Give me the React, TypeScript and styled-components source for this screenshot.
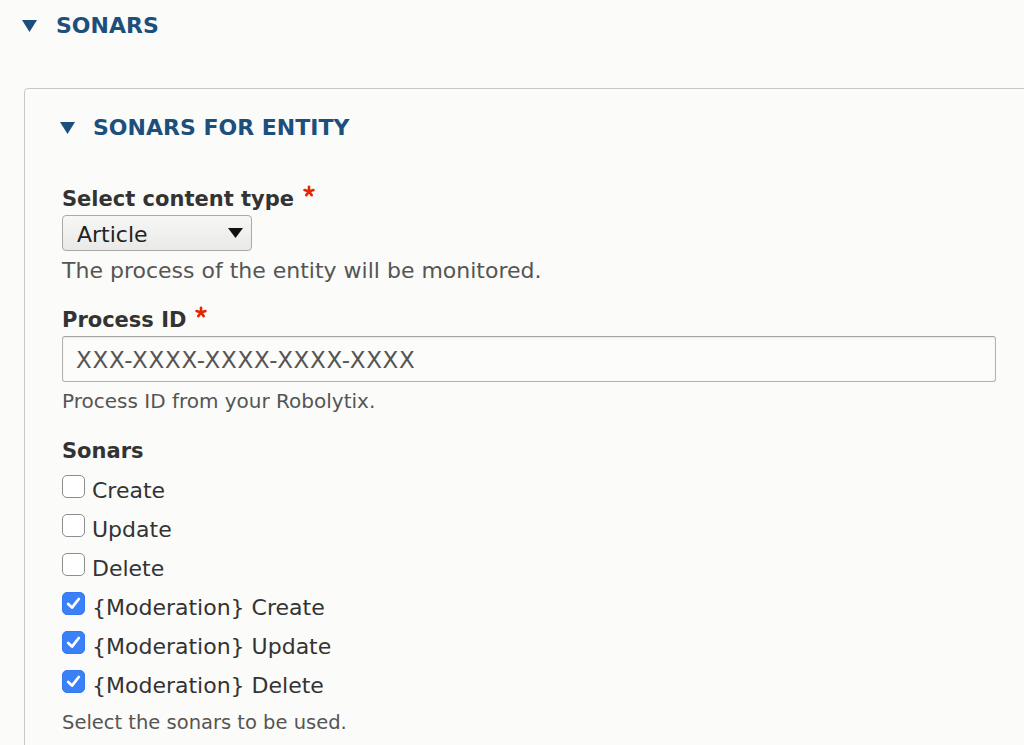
import React from 'react'
import styled, { createGlobalStyle } from 'styled-components'

const GlobalStyle = createGlobalStyle`
  html, body {
    margin: 0;
    padding: 0;
    background: #fbfbf9;
  }
  body {
    font-family: "DejaVu Sans", Verdana, sans-serif;
    color: #333;
    overflow: hidden;
  }
`

const Page = styled.div`
  width: 1024px;
  height: 745px;
  overflow: hidden;
  padding-top: 11px;
  box-sizing: border-box;
`

const Summary = styled.div<{ $indent: number; $gap: number }>`
  display: flex;
  align-items: center;
  gap: ${({ $gap }) => $gap}px;
  padding-left: ${({ $indent }) => $indent}px;
  height: 30px;
  line-height: 30px;
  font-size: 22px;
  font-weight: bold;
  text-transform: uppercase;
  color: #1d4f7d;
`

const Caret = styled.svg`
  width: 15px;
  height: 12px;
  flex: none;
`

const Fieldset = styled.section`
  margin: 47px -20px 0 24px;
  padding: 24px 0 40px 0;
  border: 1px solid #c8c8c6;
  border-radius: 4px;
  background: #fbfbf9;
`

const Body = styled.div`
  padding-left: 37px;
`

const Label = styled.div<{ $top: number }>`
  display: flex;
  align-items: flex-start;
  gap: 9px;
  margin-top: ${({ $top }) => $top}px;
  font-size: 21px;
  line-height: 26px;
  font-weight: bold;
  color: #333;
`

const Star = styled.svg`
  width: 12px;
  height: 12px;
  margin-top: -1px;
  flex: none;
`

const Select = styled.div`
  margin-top: 3px;
  width: 190px;
  height: 36px;
  box-sizing: border-box;
  display: flex;
  align-items: center;
  justify-content: space-between;
  padding: 3px 8px 0 14px;
  border: 1px solid #a9a9a7;
  border-radius: 4px;
  background: linear-gradient(#f7f7f5, #e9e9e7);
  font-size: 22px;
  color: #222;
  line-height: 30px;
`

const Arrow = styled.svg`
  width: 15px;
  height: 10px;
  margin-top: -3px;
`

const Description = styled.div<{ $top: number; $size: number }>`
  margin-top: ${({ $top }) => $top}px;
  font-size: ${({ $size }) => $size}px;
  line-height: ${({ $size }) => $size + 4}px;
  color: #555;
`

const Input = styled.div`
  margin-top: 3px;
  width: 934px;
  height: 46px;
  box-sizing: border-box;
  display: flex;
  align-items: center;
  padding: 2px 0 0 13px;
  border: 1px solid #b2b2b0;
  border-top-color: #a3a3a1;
  border-radius: 3px;
  background: #fcfcfa;
  box-shadow: inset 0 1px 2px rgba(0, 0, 0, 0.08);
  font-size: 23px;
  color: #555;
  letter-spacing: 0.7px;
`

const Options = styled.div`
  margin-top: 7px;
`

const Option = styled.div`
  display: flex;
  align-items: flex-start;
  gap: 7px;
  height: 39px;
  line-height: 39px;
  font-size: 22px;
  color: #333;
`

const Box = styled.span<{ $checked: boolean }>`
  flex: none;
  width: 23px;
  height: 23px;
  margin-top: 4px;
  box-sizing: border-box;
  border-radius: 5px;
  display: flex;
  align-items: center;
  justify-content: center;
  border: 1px solid ${({ $checked }) => ($checked ? '#3478f6' : '#8d8d8d')};
  background: ${({ $checked }) => ($checked ? '#3a80f7' : '#ffffff')};
`

const Check = styled.svg`
  width: 17px;
  height: 17px;
`

const sonars = [
  { label: 'Create', checked: false },
  { label: 'Update', checked: false },
  { label: 'Delete', checked: false },
  { label: '{Moderation} Create', checked: true },
  { label: '{Moderation} Update', checked: true },
  { label: '{Moderation} Delete', checked: true },
]

function DownCaret() {
  return (
    <Caret viewBox="0 0 15 12">
      <path d="M0 0 H15 L7.5 12 Z" fill="#1d4f7d" />
    </Caret>
  )
}

function Required() {
  const arms = [-90, -18, 54, 126, 198]
  return (
    <Star viewBox="0 0 12 12">
      {arms.map((a) => {
        const r = (a * Math.PI) / 180
        return (
          <line
            key={a}
            x1="6"
            y1="6.4"
            x2={6 + Math.cos(r) * 4.6}
            y2={6.4 + Math.sin(r) * 4.6}
            stroke="#e32700"
            strokeWidth="2.6"
            strokeLinecap="round"
          />
        )
      })}
    </Star>
  )
}

export default function App() {
  return (
    <>
      <GlobalStyle />
      <Page>
        <Summary $indent={22} $gap={19}>
          <DownCaret />
          Sonars
        </Summary>

        <Fieldset>
          <Summary $indent={35} $gap={18}>
            <DownCaret />
            Sonars for entity
          </Summary>

          <Body>
            <Label $top={43}>
              Select content type
              <Required />
            </Label>
            <Select>
              Article
              <Arrow viewBox="0 0 15 10">
                <path d="M0 0 H15 L7.5 10 Z" fill="#111" />
              </Arrow>
            </Select>
            <Description $top={7} $size={22}>
              The process of the entity will be monitored.
            </Description>

            <Label $top={23}>
              Process ID
              <Required />
            </Label>
            <Input>XXX-XXXX-XXXX-XXXX-XXXX</Input>
            <Description $top={7} $size={20}>
              Process ID from your Robolytix.
            </Description>

            <Label $top={25}>Sonars</Label>
            <Options>
              {sonars.map((s) => (
                <Option key={s.label}>
                  <Box $checked={s.checked}>
                    {s.checked && (
                      <Check viewBox="0 0 17 17">
                        <path
                          d="M3.2 9 L7 12.6 L13.8 4"
                          fill="none"
                          stroke="#fff"
                          strokeWidth="2.8"
                          strokeLinecap="round"
                          strokeLinejoin="round"
                        />
                      </Check>
                    )}
                  </Box>
                  {s.label}
                </Option>
              ))}
            </Options>
            <Description $top={6} $size={19.5}>
              Select the sonars to be used.
            </Description>
          </Body>
        </Fieldset>
      </Page>
    </>
  )
}
